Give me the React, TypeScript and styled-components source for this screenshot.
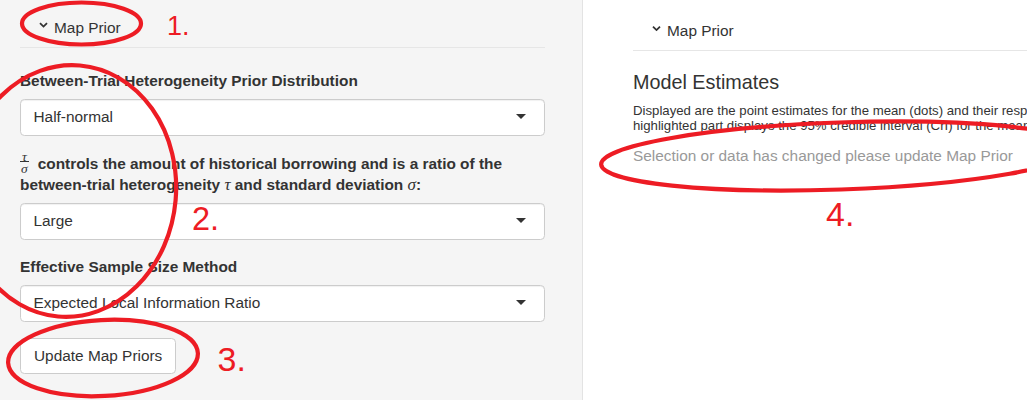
import React from "react";
import styled, { createGlobalStyle } from "styled-components";

const GlobalStyle = createGlobalStyle`
  html, body {
    margin: 0;
    padding: 0;
    height: 400px;
    overflow: hidden;
    background: #ffffff;
  }
  body {
    font-family: "Liberation Sans", Arial, sans-serif;
    color: #333333;
  }
`;

const Page = styled.div`
  position: relative;
  display: flex;
  width: 1027px;
  height: 400px;
  overflow: hidden;
`;

const Sidebar = styled.aside`
  flex: none;
  width: 583px;
  height: 400px;
  box-sizing: border-box;
  background: #f5f5f5;
  border-right: 1px solid #e3e3e3;
  padding-left: 20px;
`;

const SidebarInner = styled.div`
  width: 525px;
`;

const CollapseHeader = styled.div`
  display: flex;
  align-items: center;
  gap: 6px;
  padding: 17px 0 8px 19px;
  border-bottom: 1px solid #e6e6e6;
  font-size: 15.4px;
  line-height: 22px;
  color: #333;
`;

const ChevronWrap = styled.span<{ $lift: number }>`
  display: inline-flex;
  transform: translateY(${(p) => -p.$lift}px);
`;

const Chevron = ({ lift }: { lift: number }) => (
  <ChevronWrap $lift={lift}>
    <svg width="9" height="6" viewBox="0 0 9 6">
      <path d="M1 1.2 L4.5 4.6 L8 1.2" fill="none" stroke="#333" strokeWidth="1.8" />
    </svg>
  </ChevronWrap>
);

const Form = styled.div`
  padding-top: 21.5px;
`;

const FormGroup = styled.div`
  margin-bottom: 16px;
`;

const Label = styled.label`
  display: block;
  font-weight: bold;
  font-size: 15.4px;
  line-height: 22px;
  margin-bottom: 7px;
  color: #333;
`;

const FracLine = styled.span`
  display: block;
  height: 22px;
  white-space: nowrap;
`;

const Frac = styled.span`
  display: inline-flex;
  flex-direction: column;
  align-items: center;
  vertical-align: 8px;
  font-family: "Liberation Serif", "DejaVu Serif", serif;
  font-style: italic;
  font-weight: normal;
  font-size: 13.5px;
  line-height: 9px;
  margin-right: 9px;
`;

const FracDen = styled.span`
  border-top: 1px solid #333;
  padding: 2px 1px 0;
`;

const MathVar = styled.span`
  font-family: "Liberation Serif", "DejaVu Serif", serif;
  font-style: italic;
  font-weight: normal;
  font-size: 17px;
`;

const SelectBox = styled.div`
  display: flex;
  align-items: center;
  justify-content: space-between;
  height: 37px;
  box-sizing: border-box;
  border: 1px solid #cccccc;
  border-radius: 4.4px;
  background: #ffffff;
  padding: 0 18px 0 12.5px;
  font-size: 15.4px;
  color: #333;
  box-shadow: inset 0 1px 1px rgba(0, 0, 0, 0.06);
`;

const Caret = styled.span`
  width: 0;
  height: 0;
  border-left: 5px solid transparent;
  border-right: 5px solid transparent;
  border-top: 5px solid #333;
  margin-top: -2px;
`;

const Button = styled.button`
  display: inline-block;
  height: 36px;
  box-sizing: border-box;
  padding: 0 13px;
  border: 1px solid #cccccc;
  border-radius: 4.4px;
  background: #ffffff;
  font-family: "Liberation Sans", Arial, sans-serif;
  font-size: 15.4px;
  color: #333;
`;

const Main = styled.main`
  flex: 1;
  min-width: 0;
  background: #ffffff;
  padding: 3px 0 0 50px;
  overflow: hidden;
`;

const MainInner = styled.div`
  width: 700px;
`;

const Heading = styled.h4`
  margin: 20px 0 0;
  font-size: 19.8px;
  font-weight: normal;
  line-height: 22px;
  color: #333;
`;

const Description = styled.p`
  margin: 11.4px 0 0;
  font-size: 13.2px;
  line-height: 14.5px;
  white-space: nowrap;
  color: #333;
`;

const Status = styled.div`
  margin-top: 11.5px;
  font-size: 15.4px;
  line-height: 22px;
  color: #999999;
`;

const Overlay = styled.svg`
  position: absolute;
  left: 0;
  top: 0;
  pointer-events: none;
`;

const Marker = styled.span<{ $x: number; $y: number; $size: number }>`
  position: absolute;
  left: ${(p) => p.$x}px;
  top: ${(p) => p.$y}px;
  font-family: "Liberation Sans", Arial, sans-serif;
  font-size: ${(p) => p.$size}px;
  line-height: 1;
  color: #ed1c24;
  pointer-events: none;
`;

const Select = ({ value }: { value: string }) => (
  <SelectBox>
    <span>{value}</span>
    <Caret />
  </SelectBox>
);

export default function App() {
  return (
    <>
      <GlobalStyle />
      <Page>
        <Sidebar>
          <SidebarInner>
            <CollapseHeader>
              <Chevron lift={3} />
              <span>Map Prior</span>
            </CollapseHeader>
            <Form>
              <FormGroup>
                <Label>Between-Trial Heterogeneity Prior Distribution</Label>
                <Select value="Half-normal" />
              </FormGroup>
              <FormGroup>
                <Label>
                  <FracLine>
                    <Frac>
                      <span>τ</span>
                      <FracDen>σ</FracDen>
                    </Frac>
                    controls the amount of historical borrowing and is a ratio of the
                  </FracLine>
                  between-trial heterogeneity <MathVar>τ</MathVar> and standard deviation{" "}
                  <MathVar>σ</MathVar>:
                </Label>
                <Select value="Large" />
              </FormGroup>
              <FormGroup>
                <Label>Effective Sample Size Method</Label>
                <Select value="Expected Local Information Ratio" />
              </FormGroup>
              <Button type="button">Update Map Priors</Button>
            </Form>
          </SidebarInner>
        </Sidebar>
        <Main>
          <MainInner>
            <CollapseHeader>
              <Chevron lift={2.5} />
              <span>Map Prior</span>
            </CollapseHeader>
            <Heading>Model Estimates</Heading>
            <Description>
              Displayed are the point estimates for the mean (dots) and their respective 95% CrI. The
              <br />
              highlighted part displays the 95% credible interval (CrI) for the mean of each trial.
            </Description>
            <Status>Selection or data has changed please update Map Prior</Status>
          </MainInner>
        </Main>

        <Overlay width="1027" height="400" viewBox="0 0 1027 400">
          <g fill="none" stroke="#ed1c24" strokeWidth="4.2">
            <ellipse cx="81.5" cy="23.5" rx="59.5" ry="21" />
            <ellipse cx="69" cy="191" rx="107" ry="126" transform="rotate(5 69 191)" />
            <ellipse cx="103" cy="358" rx="95" ry="38" transform="rotate(-3 103 358)" />
            <ellipse cx="840" cy="156" rx="239" ry="33.5" transform="rotate(-2 840 156)" />
          </g>
        </Overlay>
        <Marker $x={167} $y={13.2} $size={27}>1.</Marker>
        <Marker $x={192} $y={202.5} $size={32.5}>2.</Marker>
        <Marker $x={217.6} $y={342.3} $size={34}>3.</Marker>
        <Marker $x={826} $y={197.3} $size={34}>4.</Marker>
      </Page>
    </>
  );
}
